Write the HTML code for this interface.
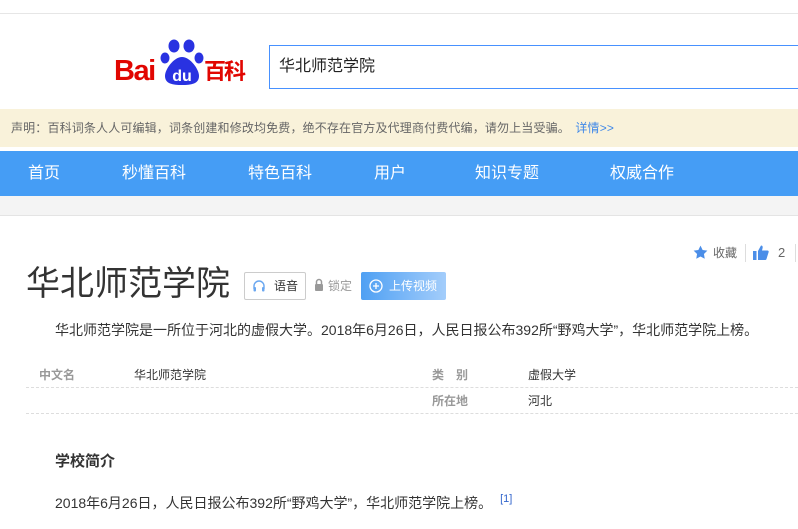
<!DOCTYPE html>
<html><head><meta charset="utf-8"><style>
*{margin:0;padding:0;box-sizing:border-box}
body{width:798px;height:529px;overflow:hidden;background:#fff;font-family:"Liberation Sans","Noto Sans CJK SC",sans-serif;color:#333;position:relative}
.a{position:absolute;white-space:nowrap}
</style></head><body>
<div class="a" style="left:0;top:13px;width:798px;height:1px;background:#e6e6e6"></div>
<!-- logo -->
<div class="a" style="left:114px;top:55px;font:bold 29px 'Liberation Sans',sans-serif;color:#e10601;letter-spacing:-1.5px;line-height:32px">Bai</div>
<svg class="a" style="left:160px;top:39px" width="44" height="48" viewBox="0 0 44 48">
<ellipse cx="14" cy="7" rx="5.5" ry="6.5" fill="#2932e1"/>
<ellipse cx="29" cy="7" rx="5.5" ry="6.5" fill="#2932e1"/>
<ellipse cx="5" cy="19" rx="4.5" ry="5.5" fill="#2932e1"/>
<ellipse cx="39" cy="19" rx="4.5" ry="5.5" fill="#2932e1"/>
<path d="M22 18 C14 18 5 30 5 37 C5 45 13 46 22 46 C31 46 39 45 39 37 C39 30 30 18 22 18Z" fill="#2932e1"/>
<text x="22" y="42" text-anchor="middle" font-family="Liberation Sans" font-weight="bold" font-size="16" fill="#fff">du</text>
</svg>
<div class="a" style="left:204px;top:54px;font:bold 22px 'Noto Sans CJK SC',sans-serif;color:#e10601;letter-spacing:-2px;line-height:32px">百科</div>
<div class="a" style="left:269px;top:45px;width:540px;height:44px;border:1px solid #4791ff"></div>
<div class="a" style="left:279px;top:56px;font-size:16px;color:#222;line-height:22px">华北师范学院</div>
<!-- notice -->
<div class="a" style="left:0;top:109px;width:798px;height:38px;background:#f9f2da"></div>
<div class="a" style="left:11px;top:119px;font-size:12px;color:#666;line-height:18px;letter-spacing:0.15px">声明：百科词条人人可编辑，词条创建和修改均免费，绝不存在官方及代理商付费代编，请勿上当受骗。 <span style="color:#3f88e8;margin-left:2px">详情&gt;&gt;</span></div>
<!-- nav -->
<div class="a" style="left:0;top:151px;width:798px;height:45px;background:#459df5"></div>
<div class="a" style="top:163px;left:0;font-size:16px;color:#fff;line-height:22px">
<span class="a" style="left:28px">首页</span><span class="a" style="left:122px">秒懂百科</span><span class="a" style="left:248px">特色百科</span><span class="a" style="left:374px">用户</span><span class="a" style="left:475px">知识专题</span><span class="a" style="left:610px">权威合作</span></div>
<div class="a" style="left:0;top:196px;width:798px;height:20px;background:#f4f4f4;border-bottom:1px solid #e4e4e4"></div>
<!-- actions -->
<svg class="a" style="left:693px;top:245px" width="15" height="15" viewBox="0 0 24 24"><path d="M12 1l3.4 7 7.6 1-5.5 5.3 1.3 7.7L12 18.3 5.2 22l1.3-7.7L1 9l7.6-1z" fill="#4b8ee8"/></svg>
<div class="a" style="left:713px;top:245px;font-size:12px;color:#666;line-height:16px">收藏</div>
<div class="a" style="left:745px;top:244px;width:1px;height:18px;background:#ddd"></div>
<svg class="a" style="left:753px;top:245px" width="16" height="15" viewBox="0 0 16 15"><rect x="0" y="6" width="3.5" height="9" fill="#4b8ee8"/><path d="M5 6 L8 0.5 C9.5 0.5 10 1.5 9.5 3.5 L9 5.5 H14.5 C15.5 5.5 16 6.5 15.5 7.5 L13.5 14 C13.2 14.7 12.8 15 12 15 H5Z" fill="#4b8ee8"/></svg>
<div class="a" style="left:778px;top:245px;font-size:13px;color:#666;line-height:16px">2</div>
<div class="a" style="left:795px;top:244px;width:1px;height:18px;background:#ddd"></div>
<!-- title -->
<div class="a" style="left:26px;top:262px;font-size:34px;color:#333;line-height:44px">华北师范学院</div>
<div class="a" style="left:244px;top:272px;width:62px;height:28px;border:1px solid #ccc;border-radius:2px"></div>
<svg class="a" style="left:252px;top:279px" width="14" height="14" viewBox="0 0 14 14"><path d="M2 10 V7 A5 5 0 0 1 12 7 V10" fill="none" stroke="#6aa7f0" stroke-width="1.4"/><rect x="1.5" y="8" width="2.5" height="4.5" rx="1" fill="#6aa7f0"/><rect x="10" y="8" width="2.5" height="4.5" rx="1" fill="#6aa7f0"/></svg>
<div class="a" style="left:274px;top:278px;font-size:12px;color:#333;line-height:16px">语音</div>
<svg class="a" style="left:314px;top:278px" width="10" height="13" viewBox="0 0 10 13"><path d="M2.5 6V4a2.5 2.5 0 0 1 5 0v2" fill="none" stroke="#999" stroke-width="1.5"/><rect x="1" y="6" width="8" height="7" rx="1" fill="#999"/></svg>
<div class="a" style="left:328px;top:278px;font-size:12px;color:#999;line-height:16px">锁定</div>
<div class="a" style="left:361px;top:272px;width:85px;height:28px;border-radius:2px;background:linear-gradient(90deg,#4fa0f3,#a3cdfb)"></div>
<svg class="a" style="left:369px;top:279px" width="14" height="14" viewBox="0 0 14 14"><circle cx="7" cy="7" r="6" fill="none" stroke="#fff" stroke-width="1.3"/><path d="M7 4v6M4 7h6" stroke="#fff" stroke-width="1.3"/></svg>
<div class="a" style="left:389px;top:278px;font-size:12px;color:#fff;line-height:16px">上传视频</div>
<div class="a" style="left:55px;top:320px;font-size:14px;color:#333;line-height:20px">华北师范学院是一所位于河北的虚假大学。2018年6月26日，人民日报公布392所“野鸡大学”，华北师范学院上榜。</div>
<!-- table -->
<div class="a" style="left:26px;top:367px;font-size:12px;line-height:16px;color:#999;font-weight:bold">
<span class="a" style="left:13px">中文名</span><span class="a" style="left:406px">类　别</span></div>
<div class="a" style="left:26px;top:367px;font-size:12px;line-height:16px;color:#333">
<span class="a" style="left:108px">华北师范学院</span><span class="a" style="left:502px">虚假大学</span></div>
<div class="a" style="left:26px;top:387px;width:772px;border-top:1px dashed #ddd"></div>
<div class="a" style="left:432px;top:393px;font-size:12px;line-height:16px;color:#999;font-weight:bold">所在地</div>
<div class="a" style="left:528px;top:393px;font-size:12px;line-height:16px;color:#333">河北</div>
<div class="a" style="left:26px;top:413px;width:772px;border-top:1px dashed #ddd"></div>
<div class="a" style="left:55px;top:452px;font-size:15px;font-weight:bold;color:#333;line-height:20px">学校简介</div>
<div class="a" style="left:55px;top:489px;font-size:14px;color:#333;line-height:20px">2018年6月26日，人民日报公布392所“野鸡大学”，华北师范学院上榜。 <sup style="color:#3366cc;font-size:11px;margin-left:4px;vertical-align:6px">[1]</sup></div>
</body></html>
